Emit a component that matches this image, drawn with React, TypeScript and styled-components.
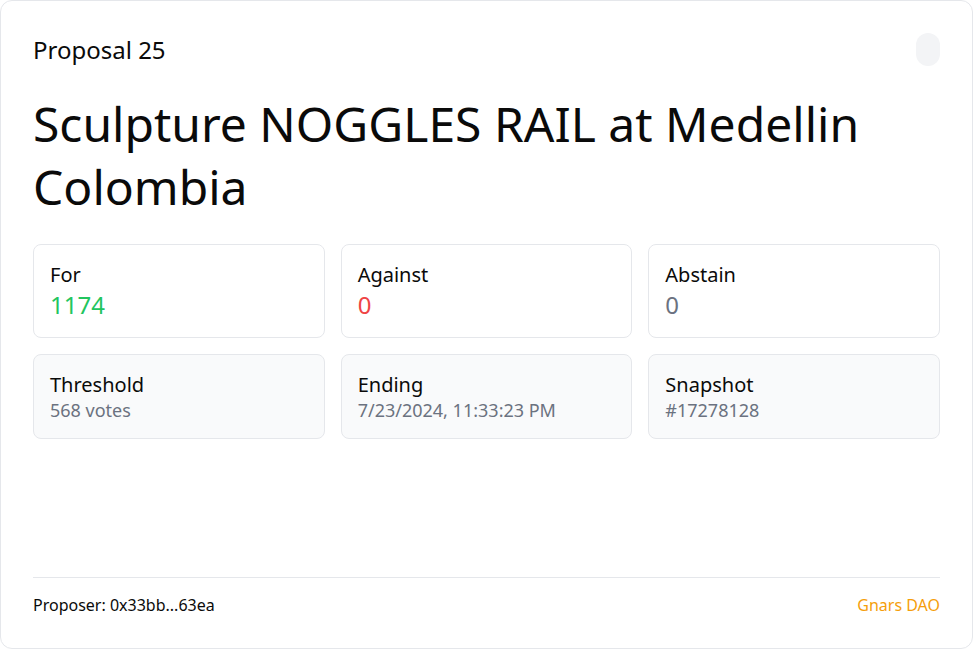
import React from "react";
import styled, { createGlobalStyle } from "styled-components";

const GlobalStyle = createGlobalStyle`
	html, body {
		margin: 0;
		padding: 0;
		background: #ffffff;
	}
	body {
		font-family: "Noto Sans", "Open Sans", sans-serif;
		color: #0a0a0a;
	}
	* {
		box-sizing: border-box;
	}
`;

type Tone = "green" | "red" | "gray";

const votes: { label: string; value: string; tone: Tone }[] = [
	{ label: "For", value: "1174", tone: "green" },
	{ label: "Against", value: "0", tone: "red" },
	{ label: "Abstain", value: "0", tone: "gray" },
];

const details = [
	{ label: "Threshold", value: "568 votes" },
	{ label: "Ending", value: "7/23/2024, 11:33:23 PM" },
	{ label: "Snapshot", value: "#17278128" },
];

const App = () => {
	return (
		<>
			<GlobalStyle />
			<Card>
				<Header>
					<Eyebrow>Proposal 25</Eyebrow>
					<Pill />
				</Header>
				<Title>Sculpture NOGGLES RAIL at Medellin Colombia</Title>

				<StatGrid>
					{votes.map((v) => (
						<VoteBox key={v.label}>
							<BoxLabel>{v.label}</BoxLabel>
							<VoteValue $tone={v.tone}>{v.value}</VoteValue>
						</VoteBox>
					))}
				</StatGrid>

				<StatGrid>
					{details.map((d) => (
						<DetailBox key={d.label}>
							<BoxLabel>{d.label}</BoxLabel>
							<DetailValue>{d.value}</DetailValue>
						</DetailBox>
					))}
				</StatGrid>

				<Footer>
					<span>Proposer: 0x33bb...63ea</span>
					<DaoName>Gnars DAO</DaoName>
				</Footer>
			</Card>
		</>
	);
};

const toneColors: Record<Tone, string> = {
	green: "#22c55e",
	red: "#ef4444",
	gray: "#6b7280",
};

const Card = styled.div`
	width: 973px;
	height: 649px;
	border: 1px solid #e5e7eb;
	border-radius: 12px;
	padding: 32px;
	display: flex;
	flex-direction: column;
	background: #ffffff;
	overflow: hidden;
`;

const Header = styled.div`
	display: flex;
	justify-content: space-between;
	align-items: center;
	height: 33px;
`;

const Eyebrow = styled.div`
	font-size: 24px;
	line-height: 32px;
`;

const Pill = styled.div`
	width: 24px;
	height: 33px;
	border-radius: 12px;
	background: #f3f4f6;
`;

const Title = styled.h1`
	margin: 26px 0 26px;
	font-size: 48px;
	font-weight: 400;
	line-height: 63px;
`;

const StatGrid = styled.div`
	display: grid;
	grid-template-columns: repeat(3, 1fr);
	gap: 16px;
	margin-bottom: 16px;
`;

const VoteBox = styled.div`
	border: 1px solid #e5e7eb;
	border-radius: 8px;
	padding: 16px;
`;

const DetailBox = styled(VoteBox)`
	background: #f9fafb;
`;

const BoxLabel = styled.div`
	font-size: 20px;
	line-height: 28px;
`;

const VoteValue = styled.div<{ $tone: Tone }>`
	font-size: 24px;
	line-height: 32px;
	color: ${(p) => toneColors[p.$tone]};
`;

const DetailValue = styled.div`
	font-size: 18px;
	line-height: 23px;
	color: #6b7280;
`;

const Footer = styled.div`
	margin-top: auto;
	border-top: 1px solid #e5e7eb;
	padding-top: 16px;
	display: flex;
	justify-content: space-between;
	align-items: center;
	font-size: 16px;
	line-height: 22px;
`;

const DaoName = styled.span`
	color: #f59e0b;
`;

export default App;
